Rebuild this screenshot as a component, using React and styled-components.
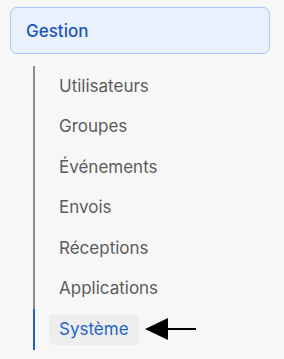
import React from 'react'
import styled, { createGlobalStyle } from 'styled-components'

const GlobalStyle = createGlobalStyle`
    html, body {
        margin: 0;
        padding: 0;
        background: #f7f7f7;
    }
    body {
        font-family: Inter, "Noto Sans", "Liberation Sans", sans-serif;
    }
`

const items = [
    'Utilisateurs',
    'Groupes',
    'Événements',
    'Envois',
    'Réceptions',
    'Applications',
    'Système',
]

function App() {
    const active = 'Système'
    return (
        <>
            <GlobalStyle />
            <Wrap>
                <Header>Gestion</Header>
                <List>
                    {items.map(label => (
                        <Row key={label} active={label === active ? 1 : 0}>
                            <Label active={label === active ? 1 : 0}>{label}</Label>
                            {label === active && (
                                <Arrow width="53" height="24" viewBox="0 0 53 24">
                                    <polygon points="0,12 23,1 23,23" fill="#000" />
                                    <rect x="20" y="11" width="31" height="2" fill="#000" />
                                </Arrow>
                            )}
                        </Row>
                    ))}
                </List>
            </Wrap>
        </>
    )
}

export default App

const Wrap = styled.div`
    width: 284px;
    height: 359px;
    padding: 7px 0 0 10px;
    box-sizing: border-box;
`

const Header = styled.div`
    width: 260px;
    height: 47px;
    box-sizing: border-box;
    border: 1px solid #a9c8f4;
    border-radius: 7px;
    background: #e9f1fd;
    color: #1d56b8;
    font-size: 17px;
    font-weight: 500;
    display: flex;
    align-items: center;
    padding-left: 15px;
`

const List = styled.div`
    margin: 12px 0 0 23px;
    border-left: 2px solid #8c8c8c;
    display: flex;
    flex-direction: column;
`

const Row = styled.div`
    height: 40.5px;
    display: flex;
    align-items: center;
    gap: 6px;
    margin-left: -2px;
    border-left: 2px solid ${props => (props.active ? '#2162c4' : 'transparent')};
    padding-left: 14px;
`

const Label = styled.span`
    font-size: 17px;
    color: ${props => (props.active ? '#2463c6' : '#5c5c5c')};
    background: ${props => (props.active ? '#eeeeee' : 'transparent')};
    border-radius: 5px;
    padding: 5px 10px;
    line-height: 21px;
`

const Arrow = styled.svg`
    display: block;
`
